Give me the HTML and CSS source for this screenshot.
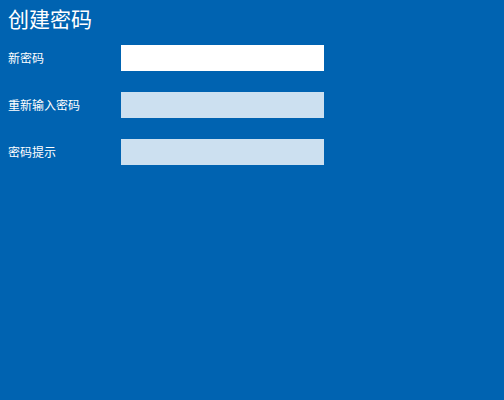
FILE: index.html
```html
<!DOCTYPE html>
<html lang="zh-CN">
<head>
<meta charset="utf-8">
<title>创建密码</title>
<link rel="stylesheet" href="styles.css">
</head>
<body>
<div class="page">
  <h1 class="title">创建密码</h1>
  <div class="form">
    <div class="row">
      <label class="label">新密码</label>
      <div class="field field-active"></div>
    </div>
    <div class="row">
      <label class="label">重新输入密码</label>
      <div class="field"></div>
    </div>
    <div class="row">
      <label class="label">密码提示</label>
      <div class="field"></div>
    </div>
  </div>
</div>
</body>
</html>
```

FILE: styles.css
```css
html, body {
  margin: 0;
  padding: 0;
  height: 100%;
  background: #0063b1;
}
body {
  font-family: "Noto Sans CJK SC", "Noto Sans", sans-serif;
  color: #ffffff;
}
.page {
  padding: 4px 8px 0 8px;
}
.title {
  margin: 0;
  font-size: 21px;
  font-weight: 400;
  line-height: 28px;
}
.form {
  display: flex;
  flex-direction: column;
  gap: 21.5px;
  margin-top: 13px;
}
.row {
  display: flex;
  align-items: center;
  height: 25.5px;
}
.label {
  width: 113px;
  font-size: 12px;
  line-height: 16px;
}
.field {
  width: 203px;
  height: 25.5px;
  background: #cce0f0;
}
.field-active {
  background: #ffffff;
}
```
